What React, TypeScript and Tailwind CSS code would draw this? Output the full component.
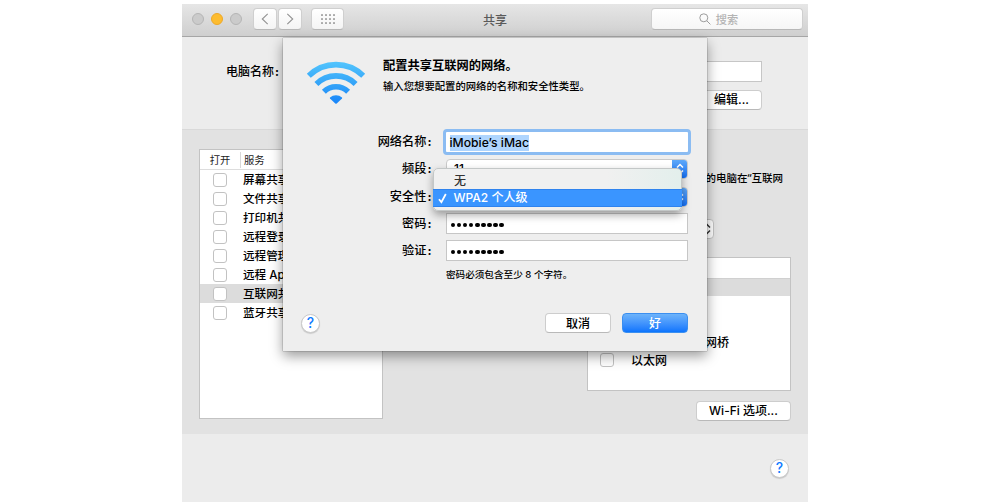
import type { ReactNode } from "react";

const services = ["屏幕共享", "文件共享", "打印机共享", "远程登录", "远程管理", "远程 Apple 事件", "互联网共享", "蓝牙共享"];

function Checkbox() {
  return <span className="block size-[14px] shrink-0 rounded-[3px] border border-[#c2c2c2] bg-white" />;
}

function HelpButton() {
  return (
    <button className="flex size-[19px] shrink-0 items-center justify-center rounded-full border border-[#c9c9c9] bg-white text-[14px] leading-none font-medium text-[#0f7bff] shadow-[0_1px_1px_rgba(0,0,0,0.15)]">
      ?
    </button>
  );
}

function PushButton({ className, children }: { className: string; children: ReactNode }) {
  return (
    <button
      className={`flex h-[20px] shrink-0 items-center justify-center whitespace-nowrap rounded-[4px] border text-[12px] leading-none font-medium ${className}`}
    >
      {children}
    </button>
  );
}

const plainButton = "border-[#cdcdcd] border-b-[#b9b9b9] bg-white";

function TitleBar() {
  return (
    <header className="flex h-[33px] shrink-0 items-start border-b border-[#a6a6a6] bg-linear-to-b from-[#e6e6e6] to-[#cfcfcf] pl-[10px]">
      <div className="mt-[9px] flex gap-[7px]">
        <span className="size-[12px] rounded-full border border-[#b5b5b5] bg-[#cbcbcb]" />
        <span className="size-[12px] rounded-full border border-[#eda829] bg-[#fdbc2f]" />
        <span className="size-[12px] rounded-full border border-[#b5b5b5] bg-[#cbcbcb]" />
      </div>
      <div className="mt-[4px] ml-[11px] flex gap-px">
        <span className="flex h-[22px] w-[24px] items-center justify-center rounded-[4px] border border-[#cfcfcf] border-b-[#b8b8b8] bg-linear-to-b from-white to-[#f4f4f4]">
          <svg width="8" height="12" viewBox="0 0 8 12" fill="none" stroke="#929292" strokeWidth="1.1">
            <path d="M6.7.8 1.3 6l5.4 5.2" />
          </svg>
        </span>
        <span className="flex h-[22px] w-[24px] items-center justify-center rounded-[4px] border border-[#cfcfcf] border-b-[#b8b8b8] bg-linear-to-b from-white to-[#f4f4f4]">
          <svg width="8" height="12" viewBox="0 0 8 12" fill="none" stroke="#929292" strokeWidth="1.1">
            <path d="M1.3.8 6.7 6l-5.4 5.2" />
          </svg>
        </span>
      </div>
      <span className="mt-[4px] ml-[9px] flex h-[22px] w-[33px] items-center justify-center rounded-[4px] border border-[#cfcfcf] border-b-[#b8b8b8] bg-linear-to-b from-white to-[#f4f4f4]">
        <svg width="14" height="10" viewBox="0 0 14 10" fill="#a9a9a9">
          {[0, 4, 8].map((y) => [0, 4, 8, 12].map((x) => <rect key={`${x}-${y}`} x={x} y={y} width="2" height="2" rx="0.6" />))}
        </svg>
      </span>
      <h1 className="mt-[7px] ml-[139px] text-[12px] leading-[20px] font-medium text-[#5a5a5a]">共享</h1>
      <div className="mt-[4px] mr-[5px] ml-auto flex h-[22px] w-[152px] items-center justify-center gap-[5px] rounded-[4px] border border-[#cfcfcf] border-b-[#b8b8b8] bg-linear-to-b from-white to-[#f6f6f6] pr-[17px] text-[11.2px] leading-none font-medium text-[#b4b4b4]">
        <svg width="12" height="12" viewBox="0 0 12 12" fill="none" stroke="#9c9c9c" strokeWidth="1">
          <circle cx="4.8" cy="4.8" r="4" />
          <path d="m7.8 7.8 3.6 3.6" />
        </svg>
        <span className="pt-[3px]">搜索</span>
      </div>
    </header>
  );
}

function ServiceTable() {
  return (
    <section className="mt-[19px] ml-[17px] h-[270px] w-[184px] overflow-hidden border border-[#c3c3c3] bg-white">
      <div className="flex h-[20px] items-center border-b border-[#dddddd] text-[10.3px] leading-none text-[#222]">
        <span className="w-[40px] text-center leading-[16px]">打开</span>
        <span className="h-[16px] border-l border-[#d8d8d8] pl-[3px] leading-[16px]">服务</span>
      </div>
      <ul>
        {services.map((name) => (
          <li
            key={name}
            className={`flex h-[19px] items-center pl-[12.5px] text-[11.6px] leading-none font-medium whitespace-nowrap ${name === "互联网共享" ? "bg-[#dcdcdc]" : ""}`}
          >
            <Checkbox />
            <span className="ml-[16.5px] pt-[2px]">{name}</span>
          </li>
        ))}
      </ul>
    </section>
  );
}

function PortPanel() {
  return (
    <section className="mr-[17px] ml-auto flex w-[204px] flex-col pt-[40px]">
      <p className="self-end pr-[8px] text-[10.5px] leading-[16px] font-medium whitespace-nowrap">
        的电脑在<span className="font-['Noto_Sans']">“</span>互联网
      </p>
      <span className="mt-[32px] ml-[97px] flex h-[20px] w-[30px] items-center justify-end rounded-[4px] border border-[#c3c3c3] bg-white pr-[2px]">
        <svg width="8" height="12" viewBox="0 0 8 12" fill="none" stroke="#333" strokeWidth="1.5">
          <path d="m1 4.5 3-3 3 3M1 7.5l3 3 3-3" />
        </svg>
      </span>
      <div className="mt-[18px] flex h-[134px] flex-col border border-[#c3c3c3] bg-white text-[12px] leading-none font-medium">
        <div className="h-[21px] border-b border-[#d0d0d0]" />
        <div className="h-[17px] bg-[#dcdcdc]" />
        <div className="mt-[38px] flex h-[18px] items-center pl-[117px]">网桥</div>
        <div className="-mt-px flex h-[18px] items-center pl-[12px]">
          <Checkbox />
          <span className="ml-[17px] pt-px">以太网</span>
        </div>
      </div>
      <PushButton className={`mt-[10px] w-[95px] self-end ${plainButton}`}>Wi-Fi 选项...</PushButton>
    </section>
  );
}

function WifiIcon() {
  return (
    <svg className="block" width="64" height="46" viewBox="0 0 64 46" fill="none">
      <defs>
        <linearGradient id="wifi" gradientUnits="userSpaceOnUse" x1="0" y1="2" x2="0" y2="44">
          <stop offset="0" stopColor="#52c4fd" />
          <stop offset="0.5" stopColor="#35a5f8" />
          <stop offset="1" stopColor="#1784fa" />
        </linearGradient>
      </defs>
      <g stroke="url(#wifi)" strokeWidth="5.6">
        <path d="M4.8 15.8a38.6 38.6 0 0 1 54.4 0" />
        <path d="M12.4 24a27.8 27.8 0 0 1 39.2 0" />
        <path d="M19.9 31.7a17.2 17.2 0 0 1 24.2 0" />
      </g>
      <path fill="url(#wifi)" d="M26 37.5a8.8 8.8 0 0 1 12 0q.4.5 0 1l-5.3 5q-.7.5-1.4 0l-5.3-5q-.4-.5 0-1Z" />
    </svg>
  );
}

function FormRow({ label, className, children }: { label: string; className: string; children: ReactNode }) {
  return (
    <div className={`flex items-center ${className}`}>
      <label className="w-[148.5px] shrink-0 text-right text-[12.2px] leading-[16px] font-medium">
        {label}
        <span className="ml-[1px] font-bold">:</span>
      </label>
      {children}
    </div>
  );
}

function Popup({ children }: { children?: ReactNode }) {
  return (
    <div className="ml-[14.5px] flex h-[20px] w-[242px] overflow-hidden rounded-[4px] border border-[#cacaca] bg-white pl-[7px] text-[12px] leading-[17px] font-medium">
      {children}
      <span className="-my-px -mr-px ml-auto flex w-[16px] items-center justify-center bg-linear-to-b from-[#62abf8] to-[#0c6cf5]">
        <svg width="8" height="12" viewBox="0 0 8 12" fill="none" stroke="white" strokeWidth="1.5">
          <path d="m1 4.5 3-3 3 3M1 7.5l3 3 3-3" />
        </svg>
      </span>
    </div>
  );
}

function PasswordField() {
  return (
    <div className="ml-[14.5px] flex h-[21px] w-[242px] items-center gap-[1.4px] border border-[#c6c6c6] bg-white pt-[3px] pl-[3.5px]">
      {Array.from({ length: 9 }, (_, i) => (
        <span key={i} className="size-[4.7px] rounded-full bg-black" />
      ))}
    </div>
  );
}

function SecurityMenu() {
  return (
    <ul className="absolute top-[130px] left-[150px] h-[43px] w-[249px] rounded-[5px] border border-[#c3c7c7] bg-linear-to-r from-[#f0f0f0] from-70% to-[#e3efec] pt-[3px] text-[12px] leading-none font-medium shadow-[0_4px_9px_rgba(0,0,0,0.35)]">
      <li className="flex h-[17px] items-center pl-[20px] text-[#333]">无</li>
      <li className="-mx-px flex h-[18px] items-center border-y border-[#2f83ee] bg-[#3a95ff] pl-[4px] text-white">
        <svg className="mr-[6.5px] ml-[1px]" width="9" height="11" viewBox="0 0 9 11" fill="none" stroke="white" strokeWidth="1.8">
          <path d="m1 6.2 2.4 3L7.8 1" />
        </svg>
        WPA2 个人级
      </li>
    </ul>
  );
}

function NetworkSheet() {
  return (
    <div className="absolute top-[34px] left-[101px] flex h-[313px] w-[424px] flex-col bg-[#eeeeee] shadow-[0_0_1px_rgba(0,0,0,0.65),0_5px_12px_rgba(0,0,0,0.4)]">
      <div className="flex h-[91px] shrink-0">
        <div className="pt-[22px] pl-[21px]">
          <WifiIcon />
        </div>
        <div className="pt-[19px] pl-[15px] whitespace-nowrap">
          <h2 className="text-[12.25px] leading-[18px] font-bold">配置共享互联网的网络。</h2>
          <p className="mt-[3px] text-[10.35px] leading-[16px] font-medium">输入您想要配置的网络的名称和安全性类型。</p>
        </div>
      </div>
      <FormRow label="网络名称" className="h-[26px]">
        <div className="ml-[11.5px] flex h-[26px] w-[248px] items-center rounded-[4px] border-3 border-[#8bbcf2] bg-white pl-[3.5px] text-[12.2px] leading-none font-medium">
          <span className="mt-px bg-[#afd5fe] leading-[16px]">iMobie’s iMac</span>
        </div>
      </FormRow>
      <FormRow label="频段" className="mt-[4px] h-[20px]">
        <Popup>11</Popup>
      </FormRow>
      <FormRow label="安全性" className="mt-[8px] h-[20px]">
        <Popup />
      </FormRow>
      <FormRow label="密码" className="mt-[6px] h-[21px]">
        <PasswordField />
      </FormRow>
      <FormRow label="验证" className="mt-[6px] h-[21px]">
        <PasswordField />
      </FormRow>
      <p className="mt-[6px] ml-[163px] text-[9.6px] leading-[16px] font-medium">密码必须包含至少 8 个字符。</p>
      <div className="mt-[30px] flex items-center pr-[19px] pl-[18px]">
        <HelpButton />
        <PushButton className={`ml-auto w-[66px] pt-[2px] ${plainButton}`}>取消</PushButton>
        <PushButton className="ml-[11px] w-[66px] border-[#3b8ff0] bg-linear-to-b from-[#6db3fa] to-[#0a74fd] pt-[2px] text-white">好</PushButton>
      </div>
      <SecurityMenu />
    </div>
  );
}

export default function App() {
  return (
    <div className="h-[504px] w-[988px] overflow-hidden bg-white pt-[4px] pl-[182px] font-['Inter','Noto_Sans_CJK_SC',sans-serif] text-black">
      <main className="relative flex h-[498px] w-[626px] flex-col overflow-hidden bg-[#ececec]">
        <TitleBar />
        <div className="flex h-[92px] shrink-0 pt-[24px]">
          <span className="ml-[44px] pt-px text-[12px] leading-[20px] font-medium">
            电脑名称<span className="ml-[1px] font-bold">:</span>
          </span>
          <div className="mr-[46px] ml-auto flex flex-col items-end gap-[8px]">
            <div className="h-[21px] w-[260px] border border-[#c6c6c6] bg-white" />
            <PushButton className={`w-[61px] ${plainButton}`}>编辑...</PushButton>
          </div>
        </div>
        <div className="flex h-[305px] shrink-0 border-t border-[#d9d9d9] bg-[#e2e2e2]">
          <ServiceTable />
          <PortPanel />
        </div>
        <footer className="flex flex-1 items-center justify-end pr-[19px]">
          <HelpButton />
        </footer>
        <NetworkSheet />
      </main>
    </div>
  );
}
